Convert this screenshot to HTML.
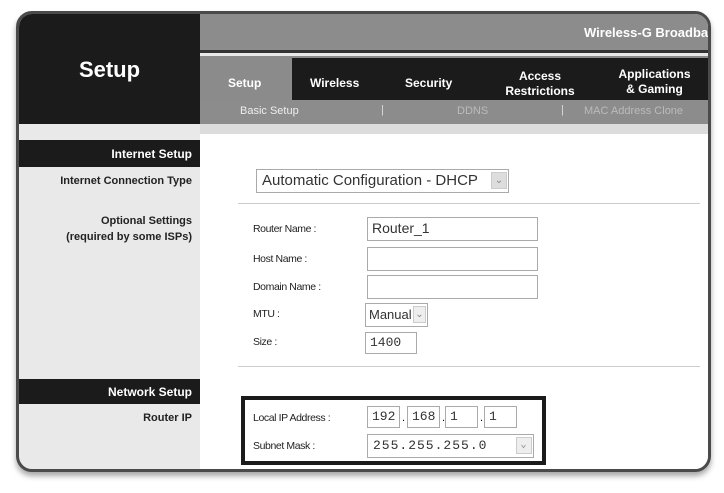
<!DOCTYPE html><html><head><style>
*{margin:0;padding:0;box-sizing:border-box}
body{width:724px;height:493px;background:#fff;position:relative;font-family:"Liberation Sans",sans-serif;overflow:hidden}
.a{position:absolute}
.frame{left:16px;top:11px;width:695px;height:461px;border:3px solid #4a4a4a;border-radius:16px;overflow:hidden;background:#e9e9e9;box-shadow:0 4px 6px rgba(0,0,0,.35)}
.b{font-weight:bold}
.lbl{font-size:10.5px;color:#222;letter-spacing:-.4px}
.in{border:1px solid #aaa;background:#fff;font-size:14px;color:#333;padding-left:4px;line-height:20px}
.sel{border:1px solid #aaa;background:#fff;font-size:15px;color:#333;padding-left:5px;white-space:nowrap;overflow:hidden}
.arr{position:absolute;right:1px;top:2px;width:16px;height:17px;background:#ddd;border:1px solid #ccc;color:#888;font-size:10px;text-align:center;line-height:16px}
.mono{font-family:"Liberation Mono",monospace;font-size:13px}
</style></head><body>
<div class="a frame">
 <div class="a" style="left:0;top:0;width:181px;height:110px;background:#1b1b1b"></div>
 <div class="a b" style="left:0;top:43px;width:181px;text-align:center;color:#fff;font-size:22px">Setup</div>
 <div class="a" style="left:181px;top:0;width:515px;height:39px;background:#8c8c8c;border-bottom:3px solid #333"></div>
 <div class="a b" style="left:565px;top:11px;color:#fff;font-size:13px;white-space:nowrap">Wireless-G Broadband</div>
 <div class="a" style="left:181px;top:42px;width:515px;height:44px;background:#8b8b8b"></div>
 <div class="a" style="left:273px;top:44px;width:420px;height:42px;background:#1b1b1b"></div>
 <div class="a b" style="left:209px;top:62px;color:#fff;font-size:12px">Setup</div>
 <div class="a b" style="left:291px;top:62px;color:#fff;font-size:12px">Wireless</div>
 <div class="a b" style="left:386px;top:62px;color:#fff;font-size:12px">Security</div>
 <div class="a b" style="left:466px;top:55px;width:110px;text-align:center;color:#fff;font-size:12px;line-height:15px">Access<br>Restrictions</div>
 <div class="a b" style="left:588px;top:53px;width:95px;text-align:center;color:#fff;font-size:12px;line-height:15px">Applications<br>&amp; Gaming</div>
 <div class="a" style="left:181px;top:86px;width:515px;height:24px;background:#8c8c8c"></div>
 <div class="a" style="left:221px;top:91px;color:#eee;font-size:11px">Basic Setup</div>
 <div class="a" style="left:362px;top:90px;color:#ddd;font-size:11px">|</div>
 <div class="a" style="left:438px;top:91px;color:#bbb;font-size:11px">DDNS</div>
 <div class="a" style="left:542px;top:90px;color:#ddd;font-size:11px">|</div>
 <div class="a" style="left:565px;top:91px;color:#bbb;font-size:11px">MAC Address Clone</div>
 <div class="a" style="left:181px;top:110px;width:515px;height:10px;background:#dcdcdc"></div>
 <div class="a" style="left:181px;top:120px;width:515px;height:340px;background:#fff"></div>
 <div class="a b" style="left:0;top:126px;width:181px;height:27px;background:#1b1b1b;color:#fff;font-size:12px;text-align:right;padding:7px 8px 0 0">Internet Setup</div>
 <div class="a b" style="left:0;top:161px;width:173px;text-align:right;font-size:11px;color:#222">Internet Connection Type</div>
 <div class="a b" style="left:0;top:199px;width:173px;text-align:right;font-size:11px;color:#222;line-height:16px">Optional Settings<br>(required by some ISPs)</div>
 <div class="a b" style="left:0;top:365px;width:181px;height:25px;background:#1b1b1b;color:#fff;font-size:12px;text-align:right;padding:6px 8px 0 0">Network Setup</div>
 <div class="a b" style="left:0;top:398px;width:173px;text-align:right;font-size:11px;color:#222">Router IP</div>
 <div class="a sel" style="left:237px;top:155px;width:253px;height:24px;line-height:22px">Automatic Configuration - DHCP<div class="arr">&#8964;</div></div>
 <div class="a" style="left:219px;top:189px;width:462px;height:1px;background:#ccc"></div>
 <div class="a lbl" style="left:234px;top:209px">Router Name :</div>
 <div class="a in" style="left:348px;top:203px;width:171px;height:24px">Router_1</div>
 <div class="a lbl" style="left:234px;top:239px">Host Name :</div>
 <div class="a in" style="left:348px;top:233px;width:171px;height:24px"></div>
 <div class="a lbl" style="left:234px;top:267px">Domain Name :</div>
 <div class="a in" style="left:348px;top:261px;width:171px;height:24px"></div>
 <div class="a lbl" style="left:234px;top:294px">MTU :</div>
 <div class="a sel" style="left:346px;top:289px;width:63px;height:24px;line-height:22px;font-size:13px;padding-left:3px">Manual<div class="arr" style="background:#eee;width:13px">&#8964;</div></div>
 <div class="a lbl" style="left:234px;top:322px">Size :</div>
 <div class="a in mono" style="left:346px;top:318px;width:52px;height:22px">1400</div>
 <div class="a" style="left:219px;top:352px;width:462px;height:1px;background:#ccc"></div>
 <div class="a" style="left:222px;top:382px;width:305px;height:69px;border:4px solid #1b1b1b;background:#fff"></div>
 <div class="a lbl" style="left:234px;top:398px">Local IP Address :</div>
 <div class="a in mono" style="left:348px;top:392px;width:33px;height:22px">192</div>
 <div class="a" style="left:383px;top:398px;font-size:11px">.</div>
 <div class="a in mono" style="left:388px;top:392px;width:33px;height:22px">168</div>
 <div class="a" style="left:423px;top:398px;font-size:11px">.</div>
 <div class="a in mono" style="left:426px;top:392px;width:33px;height:22px">1</div>
 <div class="a" style="left:461px;top:398px;font-size:11px">.</div>
 <div class="a in mono" style="left:465px;top:392px;width:33px;height:22px">1</div>
 <div class="a lbl" style="left:234px;top:426px">Subnet Mask :</div>
 <div class="a sel mono" style="left:348px;top:420px;width:167px;height:24px;line-height:22px;font-size:13px;letter-spacing:1px">255.255.255.0<div class="arr" style="background:#eee">&#8964;</div></div>
</div>
</body></html>
